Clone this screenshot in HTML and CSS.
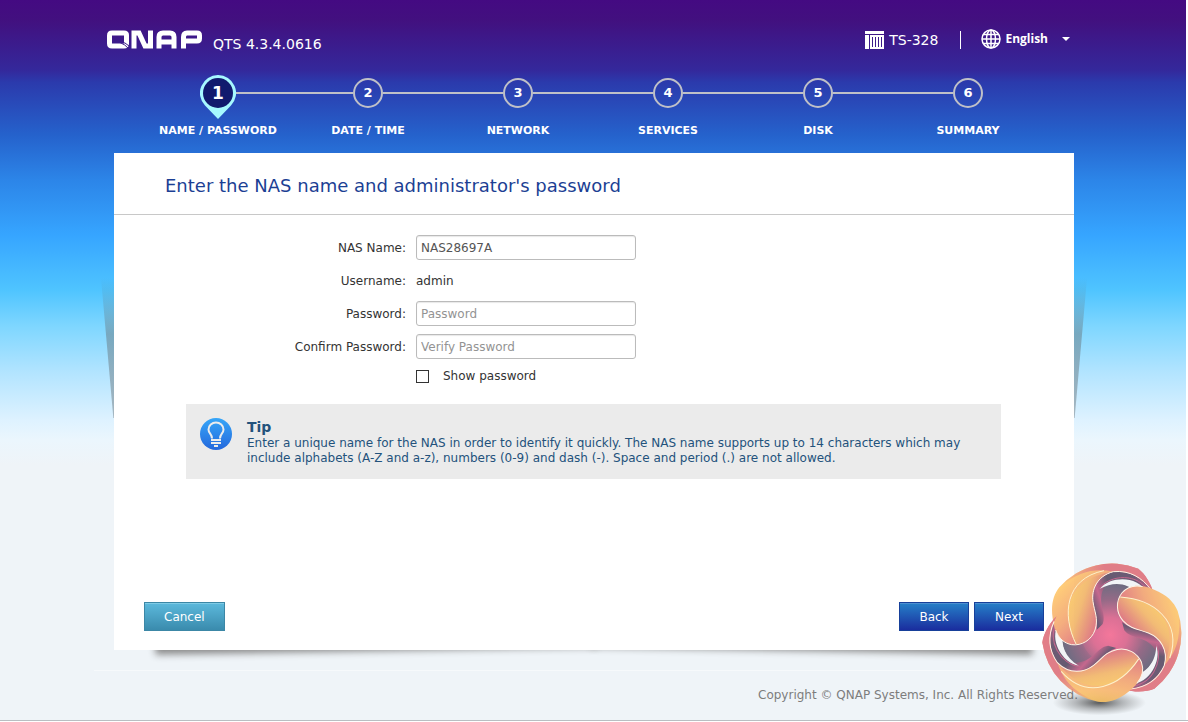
FILE: index.html
```html
<!DOCTYPE html>
<html lang="en">
<head>
  <meta charset="UTF-8">
  <title>QTS Setup</title>
  <link rel="stylesheet" href="styles.css">
</head>
<body>
<div class="page">
  <header class="top-bar">
    <svg class="logo" width="96" height="20" viewBox="0 0 96 20" role="img" aria-label="QNAP">
      <g fill="none" stroke="#fff" stroke-width="5">
        <path d="M5 3H17Q19.500 3 19.500 5V13.500Q19.500 16 17 16H5Q2.500 16 2.500 13.500V5.500Q2.500 3 5 3Z"/>
        <path d="M27 18.500V3H32L38 16H43.500V.5"/>
        <path d="M52 18.500V7Q52 3 56 3H63Q67 3 67 7V18.500M52 12H67"/>
        <path d="M76.500 18.500V7Q76.500 3 80 3H90Q92.500 3 92.500 5.500V8.500Q92.500 11 90 11H76.500"/>
      </g>
      <path d="M12 12Q18 14 23 20M12 12Q19 12 22 16" fill="none" stroke="#3b1b8c"/>
    </svg>
    <span class="version">QTS 4.3.4.0616</span>
    <div class="device">
      <svg width="19" height="18" viewBox="0 0 19 18">
        <path d="M0 0H19V3H0zM0 4H4V18H0zM5 4H19V18H5zM7 6V16H8V6zM10 6V16H11V6zM13 6V16H14V6zM16 6V16H17V6z" fill="#fff" fill-rule="evenodd"/>
      </svg>
      <span>TS-328</span>
    </div>
    <button class="language" type="button">
      <svg width="20" height="20" viewBox="0 0 20 20" fill="none" stroke="#fff" stroke-width="1.500">
        <circle cx="10" cy="10" r="9"/>
        <ellipse cx="10" cy="10" rx="4.500" ry="9"/>
        <path d="M10 1V19M1 10H19M2.500 5.500H17.500M2.500 14.500H17.500"/>
      </svg>
      <span>English</span>
      <span class="caret"></span>
    </button>
  </header>

  <ol class="steps">
    <li class="step is--active">
      <span class="number">
        <svg class="pin" width="36" height="44" viewBox="0 0 36 44">
          <path d="M18 0A18 18 0 0 1 31 30.500L18 44L5 30.500A18 18 0 0 1 18 0Z" fill="#a6f8ff"/>
          <circle cx="18" cy="18" r="15" fill="#111a6e"/>
        </svg>
        <span class="digit">1</span>
      </span>
      <span class="name">NAME / PASSWORD</span>
    </li>
    <li class="step">
      <span class="number">2</span>
      <span class="name">DATE / TIME</span>
    </li>
    <li class="step">
      <span class="number">3</span>
      <span class="name">NETWORK</span>
    </li>
    <li class="step">
      <span class="number">4</span>
      <span class="name">SERVICES</span>
    </li>
    <li class="step">
      <span class="number">5</span>
      <span class="name">DISK</span>
    </li>
    <li class="step">
      <span class="number">6</span>
      <span class="name">SUMMARY</span>
    </li>
  </ol>

  <div class="panel-wrap">
    <form class="panel">
      <h1>Enter the NAS name and administrator's password</h1>
      <div class="fields">
        <label for="nas-name">NAS Name:</label>
        <input class="text-box" id="nas-name" type="text" value="NAS28697A">
        <span>Username:</span>
        <span class="value">admin</span>
        <label for="password">Password:</label>
        <input class="text-box" id="password" type="password" placeholder="Password">
        <label for="confirm">Confirm Password:</label>
        <input class="text-box" id="confirm" type="password" placeholder="Verify Password">
        <div class="show">
          <input id="show" type="checkbox">
          <label for="show">Show password</label>
        </div>
      </div>
      <div class="tip">
        <svg width="32" height="32" viewBox="0 0 32 32">
          <defs>
            <linearGradient id="bulb" x2="0" y2="1">
              <stop stop-color="#36a6f8"/>
              <stop offset="1" stop-color="#2468dc"/>
            </linearGradient>
          </defs>
          <circle cx="16" cy="16" r="16" fill="url(#bulb)"/>
          <path d="M12 20.500C12 16 8.500 15.500 8.500 11.500C8.500 7.500 12 4.500 16 4.500S23.500 7.500 23.500 11.500C23.500 15.500 20 16 20 20.500" fill="none" stroke="#ececec" stroke-width="2"/>
          <path d="M11 22H21M11 25H21M14 28H18" stroke="#ececec" stroke-width="2"/>
        </svg>
        <div>
          <h2>Tip</h2>
          <p>Enter a unique name for the NAS in order to identify it quickly. The NAS name supports up to 14 characters which may include alphabets (A-Z and a-z), numbers (0-9) and dash (-). Space and period (.) are not allowed.</p>
        </div>
      </div>
      <div class="actions">
        <button class="btn is--cancel" type="button">Cancel</button>
        <button class="btn" type="button">Back</button>
        <button class="btn" type="submit">Next</button>
      </div>
    </form>
  </div>

  <footer>Copyright © QNAP Systems, Inc. All Rights Reserved.</footer>
</div>

<svg class="badge" width="146" height="158" viewBox="24 24 438 474" aria-hidden="true">
  <defs>
    <linearGradient id="rim" gradientUnits="userSpaceOnUse" x1="80" y1="120" x2="200" y2="230">
      <stop stop-color="#ffc766"/>
      <stop offset=".5" stop-color="#f3a26e"/>
      <stop offset="1" stop-color="#dd6a76"/>
    </linearGradient>
    <linearGradient id="edge" gradientUnits="userSpaceOnUse" x1="90" y1="100" x2="320" y2="60">
      <stop stop-color="#df6d78" stop-opacity="0"/>
      <stop offset=".6" stop-color="#df6d78"/>
    </linearGradient>
    <linearGradient id="petal" gradientUnits="userSpaceOnUse" x1="115" y1="160" x2="205" y2="190">
      <stop stop-color="#fac45e"/>
      <stop offset=".4" stop-color="#f3b464"/>
      <stop offset="1" stop-color="#de7075"/>
    </linearGradient>
    <linearGradient id="ribbon" gradientUnits="userSpaceOnUse" x1="188" y1="170" x2="370" y2="110">
      <stop stop-color="#5c4763"/>
      <stop offset=".15" stop-color="#c05580"/>
      <stop offset=".35" stop-color="#54475f"/>
      <stop offset=".75" stop-color="#5c4763"/>
      <stop offset="1" stop-color="#c05580"/>
    </linearGradient>
    <radialGradient id="core" gradientUnits="userSpaceOnUse" cx="240" cy="255" r="175">
      <stop stop-color="#f5668f"/>
      <stop offset=".3" stop-color="#d95f88"/>
      <stop offset=".6" stop-color="#8a5878"/>
      <stop offset=".85" stop-color="#615a72"/>
      <stop offset="1" stop-color="#514d5e"/>
    </radialGradient>
    <radialGradient id="ground">
      <stop stop-color="#333" stop-opacity=".8"/>
      <stop offset=".5" stop-color="#444" stop-opacity=".35"/>
      <stop offset="1" stop-color="#555" stop-opacity="0"/>
    </radialGradient>
    <path id="arm" d="M190 120C230 92 290 92 336 130L330 250L215 250Z" fill="url(#core)"/>
    <g id="band">
      <path d="M372 134C350 85 305 56 255 60C205 70 186 110 188 150C190 180 206 200 200 240L218 222C232 190 196 155 225 108C262 78 318 88 340 124Z" fill="url(#ribbon)"/>
      <path d="M210 116C242 76 326 78 348 126L318 126C294 100 252 92 210 116Z" fill="#f2f4f6"/>
      <path d="M206 118C240 70 328 70 354 124" fill="none" stroke="#c05580" stroke-width="3"/>
    </g>
    <g id="blade">
      <path d="M68 205C62 165 70 135 88 112A210 210 0 0 1 325 56C345 72 362 98 372 132C345 88 300 60 250 65C200 78 184 120 189 155C193 185 206 205 195 240C185 270 155 288 125 284C90 278 72 245 68 205Z" fill="url(#rim)"/>
      <path d="M88 112A210 210 0 0 1 325 56C345 72 362 98 372 132C345 88 300 60 250 65C200 55 150 60 88 112Z" fill="url(#edge)"/>
      <path d="M138 282C95 195 105 85 250 65C200 78 184 120 189 155C193 185 206 205 195 240C187 266 165 284 138 282Z" fill="url(#petal)"/>
      <path d="M138 282C95 195 105 85 222 62" fill="none" stroke="#fff1c4" stroke-width="3"/>
      <path d="M362 118C337 84 300 60 250 65C200 78 184 120 189 155C193 185 206 205 195 240C185 270 155 288 125 284C103 280 86 266 77 240" fill="none" stroke="#fff5e4" stroke-width="3"/>
    </g>
  </defs>
  <ellipse cx="208" cy="458" rx="140" ry="38" fill="url(#ground)"/>
  <g opacity=".88">
    <use href="#arm"/>
    <use href="#arm" transform="rotate(120 245 250)"/>
    <use href="#arm" transform="rotate(240 245 250)"/>
    <circle cx="245" cy="250" r="92" fill="url(#core)"/>
    <use href="#band"/>
    <use href="#band" transform="rotate(120 245 250)"/>
    <use href="#band" transform="rotate(240 245 250)"/>
    <use href="#blade"/>
    <use href="#blade" transform="rotate(120 245 250)"/>
    <use href="#blade" transform="rotate(240 245 250)"/>
  </g>
</svg>
</body>
</html>
```

FILE: styles.css
```css
* {
  box-sizing: border-box;
}

html {
  background: #fff;
}

body {
  position: relative;
  margin: 0 0 1px;
  min-height: calc(100vh - 1px);
  border-bottom: 1px solid #b9bec2;
  font: 12px/16px "DejaVu Sans", Verdana, sans-serif;
  color: #333;
  background: linear-gradient(#440a82 0, #42107f 20px, #34289b 70px, #2b3aac 82px, #2562cc 135px, #2c85e8 180px, #36a5ff 235px, #4fc4ff 290px, #7dd6ff 325px, #b2e4ff 372px, #def2ff 420px, #ebf6fd 440px, #eff4f8 465px) 0 0 / calc(100% - 2px) 100% no-repeat;
}

.page {
  width: 960px;
  max-width: 100%;
  margin: 0 auto;
}

.top-bar {
  display: flex;
  align-items: center;
  height: 75px;
  margin-left: -7px;
  padding-top: 4px;
  color: #fff;
  font-size: 14px;
}

.version {
  margin-left: 10px;
  padding-top: 9px;
}

.device {
  display: flex;
  align-items: center;
  gap: 5px;
  height: 18px;
  margin-left: auto;
  padding-right: 22px;
  border-right: 1px solid #fff;
}

.language {
  display: flex;
  align-items: center;
  gap: 4px;
  margin: 0 4px 2px 20px;
  padding: 0;
  border: 0;
  background: none;
  color: #fff;
  font: bold 12px/15px "Open Sans", Tahoma, sans-serif;
}

.caret {
  margin-left: 10px;
  border: 4px solid transparent;
  border-top-color: #fff;
  border-bottom: 0;
}

.steps {
  display: grid;
  grid-template-columns: repeat(6, 1fr);
  height: 78px;
  margin: 0;
  padding: 0 31px 0 29px;
  list-style: none;
  color: #fff;
  font-weight: bold;
  text-align: center;
}

.step {
  display: grid;
  grid-template-columns: 1fr auto 1fr;
  grid-template-rows: 36px 15px;
  row-gap: 12px;
  align-items: center;
}

.step::before,
.step::after {
  content: "";
  height: 2px;
  background: #bfc0c8;
}

.step::after {
  grid-area: 1 / 3;
}

.step:first-child::before,
.step:last-child::after {
  visibility: hidden;
}

.number {
  position: relative;
  width: 30px;
  height: 30px;
  border: 2px solid #bfc0c8;
  border-radius: 50%;
  font-size: 13px;
  line-height: 26px;
}

.is--active .number {
  width: 36px;
  height: 36px;
  border: 0;
  font-size: 17px;
  line-height: 36px;
}

.pin {
  position: absolute;
  top: 0;
  left: 0;
}

.digit {
  position: relative;
}

.name {
  grid-area: 2 / 1 / auto / span 3;
  font-size: 11px;
}

.panel-wrap {
  position: relative;
  z-index: 0;
}

/* side shadows */
.panel-wrap::before,
.panel-wrap::after {
  content: "";
  position: absolute;
  top: 125px;
  width: 13px;
  height: 140px;
  background: linear-gradient(rgba(100, 110, 115, 0), rgba(100, 110, 115, .45) 40%);
}

.panel-wrap::before {
  right: 100%;
  clip-path: polygon(0 0, 100% 0, 100% 100%, 95% 100%);
}

.panel-wrap::after {
  left: 100%;
  clip-path: polygon(0 0, 100% 0, 5% 100%, 0 100%);
}

.panel {
  display: flex;
  flex-direction: column;
  min-height: calc(100vh - 225px);
  padding-bottom: 19px;
  background: #fff;
}

/* lifted bottom corners */
.panel::before,
.panel::after {
  content: "";
  position: absolute;
  z-index: -1;
  bottom: 12px;
  width: 46%;
  height: 20px;
  box-shadow: 0 13px 7px #8c8c8c;
}

.panel::before {
  left: 41px;
  transform: rotate(-1deg);
}

.panel::after {
  right: 41px;
  transform: rotate(1deg);
}

h1 {
  margin: 0;
  padding: 21px 51px 16px;
  border-bottom: 1px solid #c8c8c8;
  color: #1c3f94;
  font-size: 18px;
  font-weight: normal;
  line-height: 24px;
}

.fields {
  display: grid;
  grid-template-columns: 292px 1fr;
  grid-auto-rows: 25px;
  gap: 8px 10px;
  align-items: center;
  padding-top: 20px;
  text-align: right;
}

.text-box {
  width: 220px;
  height: 25px;
  padding: 0 4px;
  border: 1px solid #bbb;
  border-radius: 3px;
  box-shadow: inset 0 1px 1px #e8e8e8;
  color: #555;
  font: inherit;
}

.text-box::placeholder {
  color: #939393;
}

.value {
  text-align: left;
}

.show {
  grid-column: 2;
  display: flex;
  align-items: center;
  gap: 14px;
  height: 18px;
  align-self: start;
}

.show input {
  appearance: none;
  width: 13px;
  height: 13px;
  margin: 0;
  border: 1px solid #333;
  background: #fff;
}

.tip {
  display: flex;
  gap: 15px;
  margin: 12px 73px 20px 72px;
  padding: 14px 14px 13px;
  background: #ebebeb;
  color: #23527c;
}

.tip svg {
  flex: none;
}

h2 {
  margin: 0;
  font-size: 14px;
  line-height: 18px;
}

p {
  margin: 0;
  line-height: 15px;
}

.actions {
  display: flex;
  gap: 5px;
  margin-top: auto;
  padding: 0 30px;
}

.btn {
  min-width: 70px;
  height: 29px;
  padding: 0 19px;
  border: 1px solid #17409a;
  background: linear-gradient(#2680c8, #1a2d9e);
  box-shadow: inset 0 1px #4d8fd0;
  color: #fff;
  font: inherit;
}

.btn.is--cancel {
  margin-right: auto;
  border-color: #3c87a6;
  background: linear-gradient(#5cb9dc, #3a8bad);
  box-shadow: inset 0 1px #7fcbe5;
}

footer {
  margin: 20px -20px 0;
  padding: 16px 16px 17px;
  border-top: 1px solid #f6f9fb;
  color: #7d7d7d;
  text-align: right;
}

.badge {
  position: absolute;
  right: 4px;
  bottom: 4px;
}
```
